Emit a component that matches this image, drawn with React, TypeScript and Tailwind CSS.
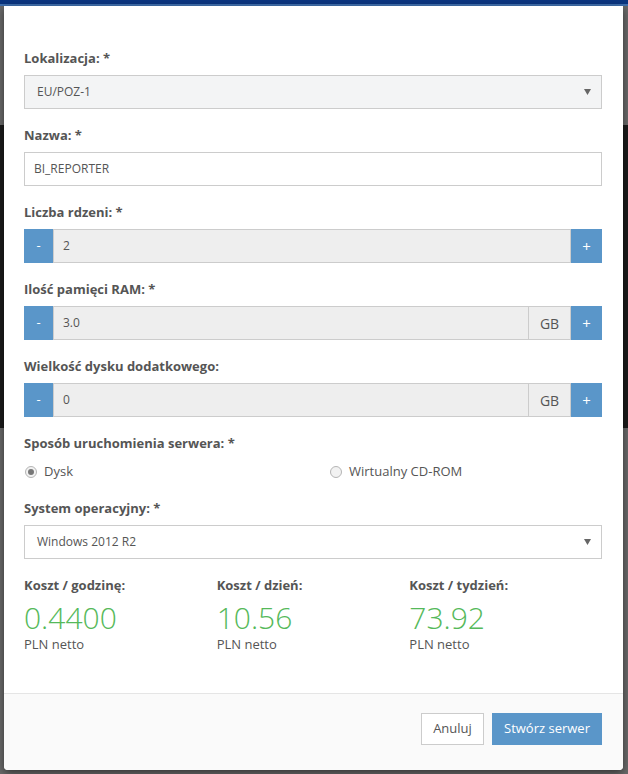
import React from 'react';

const font = { fontFamily: '"Open Sans", "Liberation Sans", sans-serif' };

function Label({ children }: { children: React.ReactNode }) {
  return <div className="h-[18px] text-[13px] leading-[18px] font-bold text-[#555]">{children}</div>;
}

function Caret() {
  return (
    <svg width="7" height="6" viewBox="0 0 7 6" className="shrink-0">
      <path d="M0 0 L7 0 L3.5 6 Z" fill="#666" />
    </svg>
  );
}

function Select({ value, grey }: { value: string; grey?: boolean }) {
  return (
    <div
      className={`flex h-[34px] items-center justify-between border border-[#ccc] pl-[12px] pr-[10px] text-[12px] text-[#555] ${
        grey ? 'bg-[#f3f4f5]' : 'bg-white'
      }`}
    >
      <span>{value}</span>
      <Caret />
    </div>
  );
}

function Spinner({ value, unit }: { value: string; unit?: string }) {
  return (
    <div className="flex h-[34px] text-[13px]">
      <button className="w-[29px] shrink-0 bg-[#5a96c9] text-white">-</button>
      <div className="flex flex-1 items-center border border-[#ccc] bg-[#eee] pl-[9px] text-[12px] text-[#555]">
        {value}
      </div>
      {unit && (
        <div className="flex w-[42px] shrink-0 items-center justify-center border border-l-0 border-[#ccc] bg-[#eee] text-[14px] text-[#555]">
          {unit}
        </div>
      )}
      <button className="w-[31px] shrink-0 bg-[#5a96c9] text-[15px] text-white">+</button>
    </div>
  );
}

function Radio({ label, checked }: { label: string; checked?: boolean }) {
  return (
    <label className="flex h-[18px] items-center gap-[7px] text-[13px] text-[#555]">
      <span className="flex h-[12px] w-[12px] items-center justify-center rounded-full border border-[#b5b5b5] bg-[#f2f2f2]">
        {checked && <span className="h-[6px] w-[6px] rounded-full bg-[#777]" />}
      </span>
      {label}
    </label>
  );
}

const costs = [
  { label: 'Koszt / godzinę:', value: '0.4400' },
  { label: 'Koszt / dzień:', value: '10.56' },
  { label: 'Koszt / tydzień:', value: '73.92' },
];

export default function App() {
  return (
    <div className="relative h-[774px] w-[628px] overflow-hidden bg-[#6a6a6a]" style={font}>
      {/* page behind the overlay */}
      <div className="h-[4px] bg-[#0b357f]" />
      <div className="h-[2px] bg-[#3f6fae]" />
      <div className="h-[119px]" />
      <div className="h-[303px] bg-[#1b1b1b]" />

      {/* modal */}
      <div className="absolute left-[4px] top-[6px] flex h-[764px] w-[619px] flex-col overflow-hidden rounded-b-[4px] bg-white shadow-[0_3px_9px_rgba(0,0,0,0.5)]">
        <div className="h-[687px] pl-[20px] pr-[21px] pt-[43px]">
          <Label>Lokalizacja: *</Label>
          <div className="mt-[8px]">
            <Select value="EU/POZ-1" grey />
          </div>

          <div className="mt-[17px]">
            <Label>Nazwa: *</Label>
          </div>
          <div className="mt-[8px] flex h-[34px] items-center border border-[#ccc] bg-white pl-[9px] text-[12px] text-[#555]">
            BI_REPORTER
          </div>

          <div className="mt-[17px]">
            <Label>Liczba rdzeni: *</Label>
          </div>
          <div className="mt-[8px]">
            <Spinner value="2" />
          </div>

          <div className="mt-[17px]">
            <Label>Ilość pamięci RAM: *</Label>
          </div>
          <div className="mt-[8px]">
            <Spinner value="3.0" unit="GB" />
          </div>

          <div className="mt-[17px]">
            <Label>Wielkość dysku dodatkowego:</Label>
          </div>
          <div className="mt-[8px]">
            <Spinner value="0" unit="GB" />
          </div>

          <div className="mt-[17px]">
            <Label>Sposób uruchomienia serwera: *</Label>
          </div>
          <div className="mt-[11px] grid grid-cols-2">
            <div className="pl-[1px]">
              <Radio label="Dysk" checked />
            </div>
            <div className="pl-[17px]">
              <Radio label="Wirtualny CD-ROM" />
            </div>
          </div>

          <div className="mt-[18px]">
            <Label>System operacyjny: *</Label>
          </div>
          <div className="mt-[8px]">
            <Select value="Windows 2012 R2" />
          </div>

          <div className="mt-[17px] grid grid-cols-3">
            {costs.map((c) => (
              <div key={c.label}>
                <Label>{c.label}</Label>
                <div className="mt-[6px] h-[35px] text-[30px] leading-[35px] font-light text-[#55b95a]">{c.value}</div>
                <div className="h-[18px] text-[13px] leading-[18px] text-[#555]">PLN netto</div>
              </div>
            ))}
          </div>
        </div>

        <div className="flex flex-1 justify-end gap-[8px] border-t border-[#e5e5e5] bg-[#fafafa] pr-[21px] pt-[19px]">
          <button className="h-[32px] w-[63px] border border-[#ccc] bg-white text-[13px] text-[#555]">Anuluj</button>
          <button className="h-[32px] w-[110px] bg-[#5a96c9] text-[13px] text-white">Stwórz serwer</button>
        </div>
      </div>
    </div>
  );
}
